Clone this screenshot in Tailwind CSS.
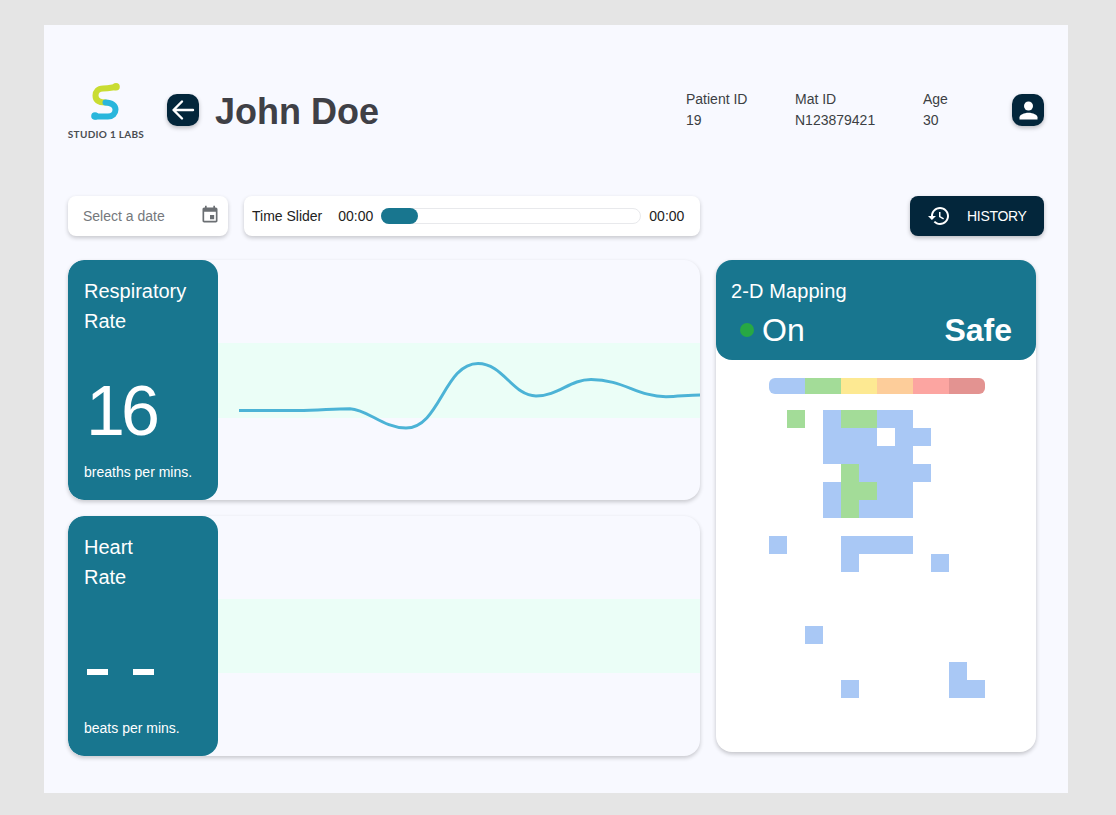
<!DOCTYPE html>
<html lang="en">
  <head>
    <meta charset="UTF-8" />
    <meta name="viewport" content="width=device-width, initial-scale=1.0" />
    <title>Patient</title>
    <script src="https://cdn.jsdelivr.net/npm/@tailwindcss/browser@4"></script>
  </head>

  <body class="h-[815px] overflow-hidden bg-[#e5e5e5] px-11 pt-[25px] font-['Liberation_Sans',Arial,sans-serif]">
    <main class="h-[768px] w-[1024px] bg-[#f8f9ff] pl-6 pr-6 pt-[58px]">
      <!-- header -->
      <header class="flex h-[54px] items-center">
        <div class="flex w-[76px] flex-col items-center pt-[3px]">
          <svg class="h-10 w-10" viewBox="0 0 40 40" fill="none" stroke-width="6" stroke-linecap="round">
            <path d="M30 4 C26 4.5 23 5.5 17 5.5 C12 5.5 9.5 9 9.5 12.5 C9.5 17 13 19.5 19.5 19.5" stroke="#c9dc32" />
            <circle cx="30" cy="3.8" r="3.8" fill="#c9dc32" />
            <path d="M19.5 19.5 C26 19.5 29.5 23 29.5 26.5 C29.5 30.5 26.5 33.5 22 33.5 H9.5" stroke="#29b6dc" />
            <circle cx="9" cy="33" r="3.8" fill="#29b6dc" />
          </svg>
          <span class="mt-[5px] whitespace-nowrap font-['Lato',sans-serif] text-[10px] leading-3 font-bold tracking-[0.3px] text-[#4a4d52]">STUDIO 1 LABS</span>
        </div>
        <button class="ml-[23px] flex h-8 w-8 items-center justify-center rounded-[10px] bg-[#03263b] shadow-[0_2px_4px_rgba(0,0,0,0.25)]">
          <svg class="h-6 w-6" viewBox="0 0 24 24" fill="none" stroke="#fff" stroke-width="2.4" stroke-linecap="round" stroke-linejoin="round">
            <path d="M22 12 H3 M11 3.5 L2.5 12 L11 20.5" />
          </svg>
        </button>
        <h1 class="ml-4 mt-1 text-4xl font-bold text-[#3f4046]">John Doe</h1>
        <div class="ml-auto flex text-sm leading-[21px] text-[#3c3f43]">
          <div class="w-[109px]"><p>Patient ID</p><p>19</p></div>
          <div class="w-[128px]"><p>Mat ID</p><p>N123879421</p></div>
          <div class="w-[89px]"><p>Age</p><p>30</p></div>
        </div>
        <button class="flex h-8 w-8 items-center justify-center rounded-[10px] bg-[#03263b] shadow-[0_2px_4px_rgba(0,0,0,0.25)]">
          <svg class="h-[27px] w-[27px]" viewBox="0 0 24 24" fill="#fff">
            <circle cx="12" cy="8" r="4" />
            <path d="M12 14 C8 14 4 16 4 18 V20 H20 V18 C20 16 16 14 12 14 Z" />
          </svg>
        </button>
      </header>

      <!-- toolbar -->
      <section class="mt-[59px] flex h-10 items-center">
        <div class="flex h-10 w-40 items-center justify-between rounded-lg bg-white pl-[15px] pr-2 shadow-[0_2px_4px_rgba(0,0,0,0.2)]">
          <span class="text-sm text-[#75787c]">Select a date</span>
          <svg class="-mt-[3px] h-5 w-5" viewBox="0 0 24 24" fill="#6b6f73">
            <path d="M19 3 H18 V1 H16 V3 H8 V1 H6 V3 H5 C3.9 3 3 3.9 3 5 V19 C3 20.1 3.9 21 5 21 H19 C20.1 21 21 20.1 21 19 V5 C21 3.9 20.1 3 19 3 Z M19 19 H5 V8 H19 Z M12 12 H17 V17 H12 Z" />
          </svg>
        </div>
        <div class="ml-4 flex h-10 w-[456px] items-center rounded-lg bg-white pl-2 shadow-[0_2px_4px_rgba(0,0,0,0.2)]">
          <span class="text-sm text-[#222]">Time Slider</span>
          <span class="ml-4 text-sm text-[#222]">00:00</span>
          <div class="ml-2 h-4 w-[260px] rounded-full border border-[#e8e9ec] bg-white">
            <div class="-mt-px -ml-px h-4 w-[37px] rounded-full bg-[#18768f]"></div>
          </div>
          <span class="ml-[8px] text-sm text-[#222]">00:00</span>
        </div>
        <button class="ml-auto flex h-10 w-[134px] items-center rounded-lg bg-[#03263b] pl-[17px] text-sm text-white shadow-[0_2px_4px_rgba(0,0,0,0.25)]">
          <svg class="h-6 w-6" viewBox="0 0 24 24" fill="#fff">
            <path d="M13 3 C8.03 3 4 7.03 4 12 H1 L4.89 15.89 L4.96 16.03 L9 12 H6 C6 8.13 9.13 5 13 5 C16.87 5 20 8.13 20 12 C20 15.87 16.87 19 13 19 C11.07 19 9.32 18.21 8.06 16.94 L6.64 18.36 C8.27 19.99 10.51 21 13 21 C17.97 21 22 16.97 22 12 C22 7.03 17.97 3 13 3 Z M12 8 V13 L16.28 15.54 L17 14.33 L13.5 12.25 V8 Z" />
          </svg>
          <span class="ml-[16px] -mt-px tracking-[-0.3px]">HISTORY</span>
        </button>
      </section>

      <!-- content -->
      <section class="mt-6 flex items-start gap-4">
        <div class="flex w-[632px] flex-col gap-4">
          <article class="flex h-60 overflow-hidden rounded-2xl bg-[#f8f9ff] shadow-[0_2px_4px_rgba(0,0,0,0.2)]">
            <div class="flex w-[150px] shrink-0 flex-col rounded-2xl bg-[#18768f] px-4 pt-4 pb-5 text-white">
              <h2 class="text-xl leading-[30px]">Respiratory<br />Rate</h2>
              <p class="mt-[30px] ml-[2px] text-[70px] leading-[90px] tracking-[-4px]">16</p>
              <p class="mt-auto text-sm leading-4">breaths per mins.</p>
            </div>
            <div class="flex-1">
              <div class="mt-[83px] h-[75px] bg-[#ebfef7]">
                <svg class="h-[75px] w-[482px] overflow-visible" viewBox="0 0 482 75" fill="none" stroke="#4cb3d6" stroke-width="3">
                  <path d="M21 67.5 H80 C100 67.5 115 65.7 132 65.7 C150 66.5 165 85 188 85 C222 85 226 20.5 260 20.5 C285 20.5 295 53 318 53 C340 53 352 36.5 373 36.5 C405 36.5 420 53.7 448 53.7 C460 53.7 470 52 482 52" />
                </svg>
              </div>
            </div>
          </article>
          <article class="flex h-60 overflow-hidden rounded-2xl bg-[#f8f9ff] shadow-[0_2px_4px_rgba(0,0,0,0.2)]">
            <div class="flex w-[150px] shrink-0 flex-col rounded-2xl bg-[#18768f] px-4 pt-4 pb-5 text-white">
              <h2 class="text-xl leading-[30px]">Heart<br />Rate</h2>
              <p class="mt-[46px] flex gap-[25px] pl-[3px] pt-[31px]">
                <span class="h-[6px] w-[21px] bg-white"></span>
                <span class="h-[6px] w-[21px] bg-white"></span>
              </p>
              <p class="mt-auto text-sm leading-4">beats per mins.</p>
            </div>
            <div class="flex-1">
              <div class="mt-[83px] h-[74px] bg-[#ebfef7]"></div>
            </div>
          </article>
        </div>

        <aside class="h-[492px] w-[320px] rounded-2xl bg-white shadow-[0_2px_4px_rgba(0,0,0,0.22)]">
          <div class="h-[100px] rounded-2xl bg-[#18768f] pl-[15px] pr-4 pt-4 text-white">
            <h2 class="text-xl leading-[30px] tracking-[0.1px]">2-D Mapping</h2>
            <div class="mt-[6px] flex items-center pl-[9px] pr-2">
              <span class="h-[14px] w-[14px] rounded-full bg-[#27a844]"></span>
              <span class="ml-2 text-[32px] leading-9">On</span>
              <span class="ml-auto text-[32px] leading-9 font-bold">Safe</span>
            </div>
          </div>
          <div class="ml-[53px] mt-[18px] flex h-4 w-[216px] overflow-hidden rounded-md">
            <span class="flex-1 bg-[#a9c8f5]"></span>
            <span class="flex-1 bg-[#a3dc98]"></span>
            <span class="flex-1 bg-[#fde992]"></span>
            <span class="flex-1 bg-[#fdcd9a]"></span>
            <span class="flex-1 bg-[#fca5a1]"></span>
            <span class="flex-1 bg-[#e39391]"></span>
          </div>
          <!-- pressure map, 18px cells -->
          <div class="ml-[53px] mt-4 grid grid-cols-[repeat(12,18px)] grid-rows-[repeat(16,18px)]">
            <i class="col-start-2 row-start-1 bg-[#a3dc98]"></i>
            <i class="col-start-4 row-start-1 bg-[#a9c8f5]"></i>
            <i class="col-span-2 col-start-5 row-start-1 bg-[#a3dc98]"></i>
            <i class="col-span-2 col-start-7 row-start-1 bg-[#a9c8f5]"></i>
            <i class="col-span-3 col-start-4 row-start-2 bg-[#a9c8f5]"></i>
            <i class="col-span-2 col-start-8 row-start-2 bg-[#a9c8f5]"></i>
            <i class="col-span-5 col-start-4 row-start-3 bg-[#a9c8f5]"></i>
            <i class="col-start-5 row-start-4 bg-[#a3dc98]"></i>
            <i class="col-span-4 col-start-6 row-start-4 bg-[#a9c8f5]"></i>
            <i class="col-start-4 row-start-5 bg-[#a9c8f5]"></i>
            <i class="col-span-2 col-start-5 row-start-5 bg-[#a3dc98]"></i>
            <i class="col-span-2 col-start-7 row-start-5 bg-[#a9c8f5]"></i>
            <i class="col-start-4 row-start-6 bg-[#a9c8f5]"></i>
            <i class="col-start-5 row-start-6 bg-[#a3dc98]"></i>
            <i class="col-span-3 col-start-6 row-start-6 bg-[#a9c8f5]"></i>
            <i class="col-start-1 row-start-8 bg-[#a9c8f5]"></i>
            <i class="col-span-4 col-start-5 row-start-8 bg-[#a9c8f5]"></i>
            <i class="col-start-5 row-start-9 bg-[#a9c8f5]"></i>
            <i class="col-start-10 row-start-9 bg-[#a9c8f5]"></i>
            <i class="col-start-3 row-start-13 bg-[#a9c8f5]"></i>
            <i class="col-start-11 row-start-15 bg-[#a9c8f5]"></i>
            <i class="col-start-5 row-start-16 bg-[#a9c8f5]"></i>
            <i class="col-span-2 col-start-11 row-start-16 bg-[#a9c8f5]"></i>
          </div>
        </aside>
      </section>
    </main>
  </body>
</html>
